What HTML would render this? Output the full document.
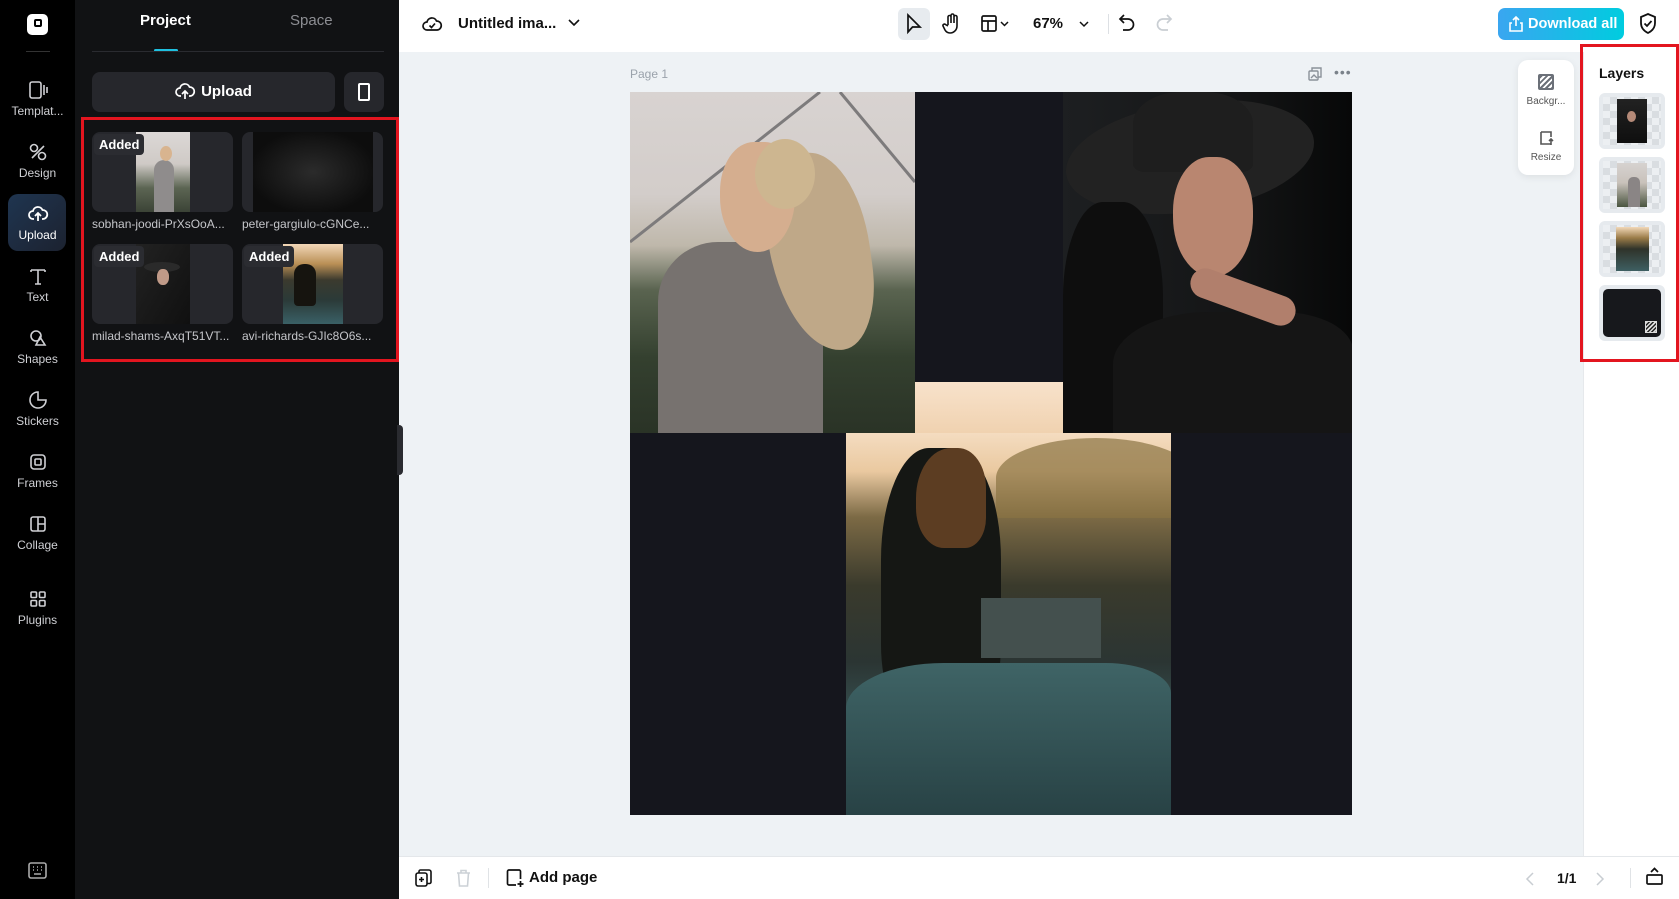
<!DOCTYPE html>
<html><head><meta charset="utf-8"><style>
*{box-sizing:border-box;margin:0;padding:0}
body{width:1679px;height:899px;overflow:hidden;font-family:"Liberation Sans",sans-serif;background:#eef2f5;position:relative}
.abs{position:absolute}
.nav{left:0;top:0;width:75px;height:899px;background:#000}
.nav .it{position:absolute;left:0;width:75px;text-align:center;color:#cfd0d4;font-size:12px}
.nav svg{display:block;margin:0 auto 4px}
.panel{left:75px;top:0;width:324px;height:899px;background:#111214}
.card{position:absolute;width:141px;height:80px;background:#26272c;border-radius:8px;overflow:hidden}
.tag{position:absolute;left:2px;top:2px;background:#2b2c31;color:#fff;font-size:13px;font-weight:bold;padding:3px 5px;border-radius:4px}
.lbl{position:absolute;color:#c5c6ca;font-size:12px;white-space:nowrap;width:141px;overflow:hidden;text-overflow:ellipsis}
.top{left:399px;top:0;width:1280px;height:52px;background:#fff}
.bot{left:399px;top:856px;width:1280px;height:43px;background:#fff;border-top:1px solid #e4e7ea}
.layers{left:1583px;top:52px;width:96px;height:804px;background:#fff;border-left:1px solid #e6e9ec}
.lt{position:absolute;left:1599px;width:66px;height:56px;border-radius:6px;background:#e6eaee;overflow:hidden}
.chk{position:absolute;inset:4px;background:repeating-conic-gradient(#d9dde1 0 25%,#eceff2 0 50%) 0 0/14px 14px}
svg{overflow:visible}
</style></head><body>

<div class="abs nav">
  <div style="position:absolute;left:27px;top:14px;width:21px;height:21px;background:#fff;border-radius:5px"><div style="position:absolute;left:7px;top:5px;width:8px;height:8px;border:2px solid #000;border-radius:2px"></div></div>
  <div style="position:absolute;left:26px;top:51px;width:24px;height:1px;background:#333"></div>
  <div class="it" style="top:80px"><svg width="20" height="20" viewBox="0 0 20 20" fill="none" stroke="#cfd0d4" stroke-width="1.6"><rect x="2" y="2" width="11" height="16" rx="2"/><path d="M16 5v10M19 7v6"/></svg>Templat...</div>
  <div class="it" style="top:142px"><svg width="20" height="20" viewBox="0 0 20 20" fill="none" stroke="#cfd0d4" stroke-width="1.6"><circle cx="6" cy="6" r="3.5"/><circle cx="14" cy="14" r="3.5"/><path d="M4 16L16 4"/></svg>Design</div>
  <div style="position:absolute;left:8px;top:194px;width:58px;height:57px;border-radius:10px;background:linear-gradient(135deg,#1f3550,#1c2230)"></div>
  <div class="it" style="top:204px;color:#fff"><svg width="20" height="20" viewBox="0 0 20 20" fill="none" stroke="#fff" stroke-width="1.8"><path d="M6 15H5a4 4 0 010-8 5 5 0 019.5-1A4 4 0 0115 15h-1"/><path d="M10 17V10M7 12l3-3 3 3"/></svg>Upload</div>
  <div class="it" style="top:266px"><svg width="20" height="20" viewBox="0 0 20 20" fill="none" stroke="#cfd0d4" stroke-width="1.6"><path d="M3 4h14M10 4v14M3 4v2M17 4v2M7 18h6"/></svg>Text</div>
  <div class="it" style="top:328px"><svg width="20" height="20" viewBox="0 0 20 20" fill="none" stroke="#cfd0d4" stroke-width="1.6"><circle cx="8" cy="8" r="5"/><path d="M12 9l5 8H8z"/></svg>Shapes</div>
  <div class="it" style="top:390px"><svg width="20" height="20" viewBox="0 0 20 20" fill="none" stroke="#cfd0d4" stroke-width="1.6"><path d="M10 2a8 8 0 108 8h-8z"/></svg>Stickers</div>
  <div class="it" style="top:452px"><svg width="20" height="20" viewBox="0 0 20 20" fill="none" stroke="#cfd0d4" stroke-width="1.6"><rect x="3" y="3" width="14" height="14" rx="3"/><rect x="7" y="7" width="6" height="6" rx="1"/></svg>Frames</div>
  <div class="it" style="top:514px"><svg width="20" height="20" viewBox="0 0 20 20" fill="none" stroke="#cfd0d4" stroke-width="1.6"><rect x="3" y="3" width="14" height="14" rx="2"/><path d="M10 3v14M10 10h7"/></svg>Collage</div>
  <div class="it" style="top:589px"><svg width="20" height="20" viewBox="0 0 20 20" fill="none" stroke="#cfd0d4" stroke-width="1.6"><rect x="3" y="3" width="5.5" height="5.5" rx="1"/><rect x="11.5" y="3" width="5.5" height="5.5" rx="1"/><rect x="3" y="11.5" width="5.5" height="5.5" rx="1"/><rect x="11.5" y="11.5" width="5.5" height="5.5" rx="1"/></svg>Plugins</div>
  <svg class="abs" style="left:28px;top:862px" width="19" height="17" viewBox="0 0 19 17" fill="none" stroke="#aaa" stroke-width="1.6"><rect x="1" y="1" width="17" height="15" rx="2"/><path d="M5 5h1M9 5h1M13 5h1M5 8h1M9 8h1M13 8h1M6 12h7"/></svg>
</div>

<div class="abs panel">
  <div class="abs" style="left:65px;top:12px;color:#fff;font-size:15px;font-weight:bold">Project</div>
  <div class="abs" style="left:215px;top:12px;color:#8d8e93;font-size:15px">Space</div>
  <div class="abs" style="left:79px;top:49px;width:24px;height:3px;background:#1fc0e0;border-radius:2px"></div>
  <div class="abs" style="left:17px;top:51px;width:292px;height:1px;background:#2a2b30"></div>
  <div class="abs" style="left:17px;top:72px;width:243px;height:40px;background:#26272c;border-radius:8px;color:#fff;font-size:15px;font-weight:bold;text-align:center;line-height:40px"><svg width="20" height="18" viewBox="0 0 20 18" fill="none" stroke="#fff" stroke-width="1.7" style="vertical-align:-4px;margin-right:6px"><path d="M6 14H5a4 4 0 010-8 5 5 0 019.5-1A4 4 0 0115 14h-1"/><path d="M10 17v-7M7 12l3-3 3 3"/></svg>Upload</div>
  <div class="abs" style="left:269px;top:72px;width:40px;height:40px;background:#26272c;border-radius:8px"><div style="position:absolute;left:14px;top:11px;width:12px;height:18px;border:2px solid #fff;border-radius:2px"></div></div>
  <div class="abs" style="left:6px;top:117px;width:318px;height:245px;border:3px solid #e3151f"></div>
  <div class="card" style="left:17px;top:132px"><div style="position:absolute;left:44px;top:0;width:54px;height:80px;background:linear-gradient(#dcd8d6 0,#cfcac6 40%,#5c6553 70%,#3b4336)"></div><div style="position:absolute;left:62px;top:28px;width:20px;height:52px;border-radius:10px 10px 0 0;background:#8f8c8c"></div><div style="position:absolute;left:68px;top:14px;width:12px;height:15px;border-radius:50%;background:#d8b48f"></div><span class="tag">Added</span></div>
  <div class="lbl" style="left:17px;top:217px">sobhan-joodi-PrXsOoA...</div>
  <div class="card" style="left:167px;top:132px"><div style="position:absolute;left:11px;top:0;width:120px;height:80px;background:radial-gradient(#2b2b2b,#0d0d0d 75%)"></div></div>
  <div class="lbl" style="left:167px;top:217px">peter-gargiulo-cGNCe...</div>
  <div class="card" style="left:17px;top:244px"><div style="position:absolute;left:44px;top:0;width:54px;height:80px;background:linear-gradient(120deg,#222 0,#101010)"></div><div style="position:absolute;left:52px;top:18px;width:36px;height:10px;border-radius:50%;background:#2a2a2a"></div><div style="position:absolute;left:65px;top:25px;width:12px;height:16px;border-radius:45%;background:#c09a88"></div><span class="tag">Added</span></div>
  <div class="lbl" style="left:17px;top:329px">milad-shams-AxqT51VT...</div>
  <div class="card" style="left:167px;top:244px"><div style="position:absolute;left:41px;top:0;width:60px;height:80px;background:linear-gradient(#f2d7b8 0,#b98f55 25%,#3b3a2e 45%,#2b3a38 70%,#3a6066)"></div><div style="position:absolute;left:52px;top:20px;width:22px;height:42px;border-radius:10px 10px 4px 4px;background:#16140f"></div><span class="tag">Added</span></div>
  <div class="lbl" style="left:167px;top:329px">avi-richards-GJIc8O6s...</div>
</div>

<div class="abs" style="left:397px;top:425px;width:6px;height:50px;background:#2a2b30;border-radius:0 4px 4px 0"></div>

<div class="abs top">
  <svg class="abs" style="left:23px;top:14px" width="20" height="20" viewBox="0 0 20 20" fill="none" stroke="#111" stroke-width="1.7"><path d="M6 16H5a4 4 0 010-8 5 5 0 019.5-1A4 4 0 0115 16z"/><path d="M7.5 11.5l2 2 3.5-4"/></svg>
  <div class="abs" style="left:59px;top:15px;font-size:15px;font-weight:bold;color:#111">Untitled ima...</div>
  <svg class="abs" style="left:169px;top:19px" width="12" height="8" viewBox="0 0 12 8" fill="none" stroke="#111" stroke-width="1.6"><path d="M1 1l5 5 5-5"/></svg>
  <div class="abs" style="left:499px;top:8px;width:32px;height:32px;background:#e7ebef;border-radius:6px"></div>
  <svg class="abs" style="left:507px;top:14px" width="16" height="20" viewBox="0 0 16 20" fill="none" stroke="#111" stroke-width="1.7"><path d="M2 1v17l4.5-5H14z"/></svg>
  <svg class="abs" style="left:544px;top:13px" width="18" height="22" viewBox="0 0 18 22" fill="none" stroke="#111" stroke-width="1.6"><path d="M5 12V4a1.5 1.5 0 013 0v6V2.5a1.5 1.5 0 013 0V10V4a1.5 1.5 0 013 0v9a7 7 0 01-7 7 6 6 0 01-5-3l-2-4a1.5 1.5 0 012.5-1.5L5 13"/></svg>
  <svg class="abs" style="left:582px;top:15px" width="16" height="17" viewBox="0 0 16 17" fill="none" stroke="#111" stroke-width="1.7"><rect x="1" y="1" width="14" height="15" rx="1.5"/><path d="M1 6h14M7 6v10"/></svg>
  <svg class="abs" style="left:601px;top:21px" width="9" height="6" viewBox="0 0 9 6" fill="none" stroke="#111" stroke-width="1.5"><path d="M1 1l3.5 3.5L8 1"/></svg>
  <div class="abs" style="left:634px;top:15px;font-size:15px;font-weight:bold;color:#111">67%</div>
  <svg class="abs" style="left:680px;top:21px" width="10" height="6" viewBox="0 0 10 6" fill="none" stroke="#111" stroke-width="1.5"><path d="M1 1l4 4 4-4"/></svg>
  <div class="abs" style="left:709px;top:14px;width:1px;height:20px;background:#dde0e4"></div>
  <svg class="abs" style="left:720px;top:14px" width="16" height="19" viewBox="0 0 16 19" fill="none" stroke="#111" stroke-width="1.7"><path d="M5 1L1 5l4 4"/><path d="M1 5h8a5.5 5.5 0 010 11H4"/></svg>
  <svg class="abs" style="left:757px;top:14px" width="16" height="19" viewBox="0 0 16 19" fill="none" stroke="#c9ced3" stroke-width="1.7"><path d="M11 1l4 4-4 4"/><path d="M15 5H7a5.5 5.5 0 000 11h5"/></svg>
  <div class="abs" style="left:1099px;top:8px;width:126px;height:32px;border-radius:7px;background:linear-gradient(90deg,#3aa6f0,#00ccdf);color:#fff;font-size:14.5px;font-weight:bold;line-height:32px;padding-left:30px">Download all</div>
  <svg class="abs" style="left:1110px;top:16px" width="14" height="16" viewBox="0 0 14 16" fill="none" stroke="#fff" stroke-width="1.6"><path d="M7 10V1M4 4l3-3 3 3M3 7H1v8h12V7h-2"/></svg>
  <svg class="abs" style="left:1240px;top:13px" width="18" height="21" viewBox="0 0 18 21" fill="none" stroke="#111" stroke-width="1.8"><path d="M9 1l7 3v6c0 5-3 8-7 10-4-2-7-5-7-10V4z"/><path d="M5.5 10.5l2.5 2.5 4.5-5"/></svg>
</div>

<div class="abs" style="left:630px;top:67px;font-size:12px;color:#9aa2ab">Page 1</div>
<svg class="abs" style="left:1308px;top:67px" width="14" height="14" viewBox="0 0 14 14" fill="none" stroke="#8a9199" stroke-width="1.4"><rect x="1" y="4" width="9" height="9" rx="1"/><path d="M4 4V1h9v9h-3M3 11l3-3 3 3"/></svg>
<div class="abs" style="left:1334px;top:64px;font-size:14px;color:#7a828a;letter-spacing:1px">•••</div>

<div class="abs" style="left:630px;top:92px;width:722px;height:723px;background:#15161d;overflow:hidden">
  <div class="abs" style="left:0;top:0;width:285px;height:341px;background:linear-gradient(#d8d3d1 0,#d3cdca 30%,#bfb8ab 45%,#5a6450 58%,#34402f 78%,#2a3326);overflow:hidden">
    <svg class="abs" style="left:0;top:0" width="285" height="341"><path d="M0 150L190 0M210 0L285 90" stroke="#7d7b7c" stroke-width="3" fill="none"/></svg>
    <div class="abs" style="left:28px;top:150px;width:165px;height:200px;border-radius:60px 60px 0 0;background:#77726f"></div>
    <div class="abs" style="left:140px;top:60px;width:100px;height:200px;border-radius:40% 50% 40% 60%;background:#bfa888;transform:rotate(-8deg)"></div>
    <div class="abs" style="left:90px;top:50px;width:75px;height:110px;border-radius:45% 40% 50% 50%;background:#d5ae8f"></div>
    <div class="abs" style="left:125px;top:47px;width:60px;height:70px;border-radius:50%;background:#cdb690"></div>
  </div>
  <div class="abs" style="left:433px;top:0;width:289px;height:341px;background:linear-gradient(90deg,#1d1f21,#141516 60%,#070808);overflow:hidden">
    <div class="abs" style="left:2px;top:10px;width:250px;height:110px;border-radius:50%;background:#222;transform:rotate(-8deg)"></div>
    <div class="abs" style="left:70px;top:0;width:120px;height:80px;border-radius:40% 40% 10% 10%;background:#1e1e1e"></div>
    <div class="abs" style="left:0;top:110px;width:100px;height:240px;background:#0e0e0e;border-radius:40% 40% 0 0"></div>
    <div class="abs" style="left:110px;top:65px;width:80px;height:120px;border-radius:45% 45% 50% 50%;background:#b98670"></div>
    <div class="abs" style="left:50px;top:220px;width:240px;height:130px;border-radius:40% 30% 0 0;background:#151515"></div>
    <div class="abs" style="left:125px;top:190px;width:110px;height:30px;border-radius:15px;background:#b17f6c;transform:rotate(20deg)"></div>
  </div>
  <div class="abs" style="left:216px;top:341px;width:325px;height:382px;background:linear-gradient(#f4dcc0 0,#eac9a0 10%,#7c6a45 22%,#3a3a2c 40%,#2b3533 60%,#3b5a5c 80%,#2b4a4e);overflow:hidden">
    <div class="abs" style="left:150px;top:5px;width:200px;height:80px;border-radius:50% 50% 0 0;background:#8a7443;opacity:.7"></div>
    <div class="abs" style="left:35px;top:15px;width:120px;height:280px;border-radius:40% 40% 30% 30%;background:#151714"></div>
    <div class="abs" style="left:70px;top:15px;width:70px;height:100px;border-radius:50% 40% 30% 40%;background:#5c3d22"></div>
    <div class="abs" style="left:135px;top:165px;width:120px;height:60px;background:#44504e"></div>
    <div class="abs" style="left:0;top:230px;width:325px;height:152px;background:linear-gradient(#3f6466,#284245);border-radius:30% 20% 0 0"></div>
  </div>
  <div class="abs" style="left:285px;top:290px;width:148px;height:51px;background:linear-gradient(#f8e2cb,#f0d2b0)"></div>
</div>

<div class="abs" style="left:1518px;top:60px;width:56px;height:115px;background:#fff;border-radius:10px;box-shadow:0 2px 8px rgba(0,0,0,.08)">
  <div class="abs" style="left:20px;top:14px;width:16px;height:16px;border:2px solid #6b7078;border-radius:2px;background:repeating-linear-gradient(135deg,#6b7078 0 2px,#fff 2px 4px)"></div>
  <div class="abs" style="left:0;top:36px;width:56px;text-align:center;font-size:10px;color:#555">Backgr...</div>
  <svg class="abs" style="left:20px;top:70px" width="16" height="16" viewBox="0 0 16 16" fill="none" stroke="#555" stroke-width="1.6"><path d="M3 2v12h10M3 2h10v5M13 10v5M11 11l2-2 2 2"/></svg>
  <div class="abs" style="left:0;top:92px;width:56px;text-align:center;font-size:10px;color:#555">Resize</div>
</div>

<div class="abs layers"></div>
<div class="abs" style="left:1580px;top:44px;width:99px;height:318px;border:3px solid #e3151f"></div>
<div class="abs" style="left:1599px;top:65px;font-size:14px;font-weight:bold;color:#111">Layers</div>
<div class="lt" style="top:93px"><div class="chk"></div><div class="abs" style="left:18px;top:6px;width:30px;height:44px;background:linear-gradient(#222,#0f0f0f)"><div style="position:absolute;left:10px;top:12px;width:9px;height:11px;border-radius:50%;background:#b58a78"></div></div></div>
<div class="lt" style="top:157px"><div class="chk"></div><div class="abs" style="left:18px;top:6px;width:30px;height:44px;background:linear-gradient(#d6d2d0,#c9c2bb 45%,#4a5540)"><div style="position:absolute;left:11px;top:14px;width:12px;height:30px;border-radius:5px 5px 0 0;background:#8a8585"></div></div></div>
<div class="lt" style="top:221px"><div class="chk"></div><div class="abs" style="left:17px;top:6px;width:33px;height:44px;background:linear-gradient(#f2d8b8,#9a7b48 25%,#2f332a 50%,#3e5f62)"></div></div>
<div class="lt" style="top:285px;height:56px"><div class="abs" style="left:4px;top:4px;width:58px;height:48px;background:#17181c;border-radius:5px"></div><div class="abs" style="left:46px;top:36px;width:12px;height:12px;border:1.5px solid #ddd;background:repeating-linear-gradient(135deg,#ddd 0 1.5px,#222 1.5px 3px)"></div></div>

<div class="abs bot">
  <svg class="abs" style="left:16px;top:12px" width="17" height="18" viewBox="0 0 17 18" fill="none" stroke="#111" stroke-width="1.6"><rect x="1" y="4" width="11" height="13" rx="2"/><path d="M4 4V2.5A1.5 1.5 0 015.5 1H14a2 2 0 012 2v10a1.5 1.5 0 01-1.5 1.5H12M6.5 8v5M4 10.5h5"/></svg>
  <svg class="abs" style="left:57px;top:12px" width="15" height="18" viewBox="0 0 15 18" fill="none" stroke="#ccd1d6" stroke-width="1.6"><path d="M1 4h13M5 4V1.5h5V4M2.5 4l1 13h8l1-13"/></svg>
  <div class="abs" style="left:89px;top:11px;width:1px;height:20px;background:#e0e3e6"></div>
  <svg class="abs" style="left:107px;top:12px" width="18" height="19" viewBox="0 0 18 19" fill="none" stroke="#111" stroke-width="1.7"><path d="M10 16H3a1.5 1.5 0 01-1.5-1.5v-12A1.5 1.5 0 013 1h10a1.5 1.5 0 011.5 1.5V10M14.5 12v6M11.5 15h6"/></svg>
  <div class="abs" style="left:130px;top:12px;font-size:15px;font-weight:bold;color:#111">Add page</div>
  <svg class="abs" style="left:1127px;top:15px" width="8" height="14" viewBox="0 0 8 14" fill="none" stroke="#c8cdd2" stroke-width="1.5"><path d="M7 1L1 7l6 6"/></svg>
  <div class="abs" style="left:1158px;top:13px;font-size:14px;font-weight:bold;color:#111">1/1</div>
  <svg class="abs" style="left:1197px;top:15px" width="8" height="14" viewBox="0 0 8 14" fill="none" stroke="#c8cdd2" stroke-width="1.5"><path d="M1 1l6 6-6 6"/></svg>
  <div class="abs" style="left:1231px;top:11px;width:1px;height:20px;background:#e0e3e6"></div>
  <svg class="abs" style="left:1247px;top:10px" width="17" height="18" viewBox="0 0 17 18" fill="none" stroke="#111" stroke-width="1.7"><rect x="1" y="8" width="15" height="9" rx="1"/><path d="M5 5l3.5-3.5L12 5"/></svg>
</div>
</body></html>
